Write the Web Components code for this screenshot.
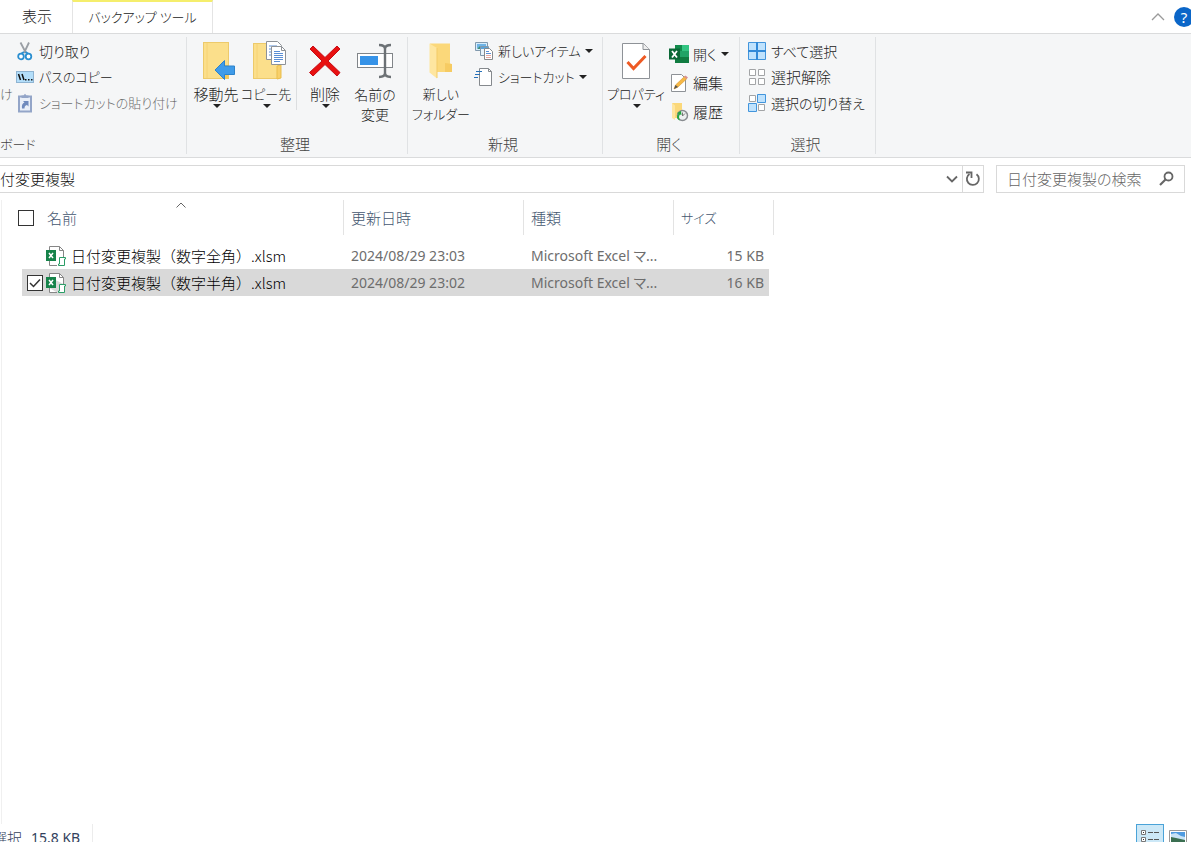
<!DOCTYPE html>
<html lang="ja">
<head>
<meta charset="utf-8">
<title>日付変更複製</title>
<style>
html,body{margin:0;height:100%;overflow:hidden;background:#fff}
body{font:300 15px/20px "Noto Sans CJK JP","Noto Sans",sans-serif;font-feature-settings:"palt";color:#222}
</style>
</head>
<body>
<file-explorer></file-explorer>
<script>
const ICONS = {
cut:[18,20,'<path d="M4.500 1.500 10 12M13 1.500 8 12" fill="none" stroke="#9a9fa5" stroke-width="1.800"/><path d="M8 11 5.500 12.500M9.500 11 12 12.500" stroke="#2b8fd0" stroke-width="2"/><circle cx="5" cy="15.500" r="2.800" fill="#fff" stroke="#2b8fd0" stroke-width="1.800"/><circle cx="12.500" cy="15.500" r="2.800" fill="#fff" stroke="#2b8fd0" stroke-width="1.800"/>'],
path:[18,12,'<rect x=".5" y=".5" width="17" height="11" fill="#b3defa" stroke="#8fb4d2"/><path d="M2.500 3 4.500 9M6 3 8 9" stroke="#111" stroke-width="1.500"/><path d="M9 8h1.500v1.500H9zM12 8h1.500v1.500H12zM15 8h1.500v1.500H15z" fill="#111"/>'],
paste:[18,20,'<path d="M3 3.500h12v15H3z" fill="#e9eff8" stroke="#93a5c8" stroke-width="2"/><path d="M5.500 4V2.500h2L9 .8l1.500 1.700h2V5h-7z" fill="#93a5c8"/><path d="M6 15.500c-.5-3.500.5-5.500 2.500-6L7 8h5.500v5.500L11 12c-2 .5-2.500 1.500-2.500 3.500z" fill="#6f8abd"/>'],
move:[40,38,'<g transform="translate(6)"><rect x="1.500" y=".5" width="25" height="36" fill="#fbdf8b" stroke="#edca6b"/><path d="M5 1v35" stroke="#f6d275"/><path d="M23 23h4v14h-4z" fill="#f3c95f"/><path d="m13 28 9.500-9.500V24h10v8.500h-10v5z" fill="#3f9be9" stroke="#2d83cb"/></g>'],
copy:[44,40,'<g transform="translate(8)"><rect x="1.500" y="2.500" width="25" height="35" fill="#fbdf8b" stroke="#edca6b"/><path d="M5 3v34" stroke="#f6d275"/><path d="m25 25 4-1v13l-4 1z" fill="#f8d06a" stroke="#e9bd4c"/><path d="M14.500.5h11l4 4v14h-15z" fill="#fff" stroke="#8e9297"/><path d="M17 5h8M17 8h3M17 11h3M17 14h3" stroke="#5b8fd5"/><path d="M19.500 5.500h10l4 4v14h-14z" fill="#fff" stroke="#8e9297"/><path d="M29.500 5.500v4h4" fill="none" stroke="#8e9297"/><path d="M22 10.500h6M22 12.500h9M22 14.500h9M22 16.500h9M22 18.500h9M22 20.500h6" stroke="#5b8fd5"/></g>'],
del:[34,34,'<path d="M2 5 5 2l12 11.500L29 2l3 3-12 12 12 11.500-3 3.500-12-11.500L5 32l-3.500-3.500L14 17z" fill="#e81010" stroke="#c60c16"/>'],
rename:[38,36,'<rect x="1.500" y="10.500" width="35" height="14" fill="#fff" stroke="#818589"/><rect x="4" y="13" width="18" height="9" fill="#3693e8"/><path d="M23 2c4 0 6 1 6 4 0-3 2-4 6-4M29 5v26M23 34c4 0 6-1 6-4 0 3 2 4 6 4" fill="none" stroke="#6c7175" stroke-width="2.400"/>'],
folder:[26,36,'<path d="M2 .5h20v20l2 1v7.500H6z" fill="#fbd87a"/><path d="m17 20 7 1v8h-7z" fill="#f6cb62"/><path d="M1.500.5 9 5v30.500l-7.500-6z" fill="#fee6a0"/><path d="M9 5v30" stroke="#f4cb66"/>'],
newitem:[20,20,'<path d="M1.500 1.500h12v8h-12z" fill="#d7edfc" stroke="#8199ad"/><path d="M3 3h9v4H3z" fill="#6fb4e6"/><path d="m3 8 3-3 3 3" fill="#3f8f7a"/><path d="M6.500 5.500h8v9h-8z" fill="#eaf4fb" stroke="#8199ad"/><path d="M7 6h7v2H7z" fill="#5aa3d7"/><path d="M10.500 7.500h5l3 3v8h-8z" fill="#fff" stroke="#86898d"/><path d="M12 10.500h3M12 12.500h5" stroke="#5b8fd5"/><path d="M12 14.500h5M12 16.500h5" stroke="#e5a6a0"/>'],
shortcut:[20,20,'<path d="M5.500 1.500h9l3 3v14h-12z" fill="#fff" stroke="#85898d"/><path d="M14.500 1.500v3h3" fill="none" stroke="#85898d"/><path d="M2 4.500h6M1 7.500h5M0 10.500h4" stroke="#2771b9"/>'],
prop:[30,38,'<path d="M1.500 1.500h21l6 6v29h-27z" fill="#fff" stroke="#8e9297"/><path d="M22 1.500v6h6.500" fill="#eee" stroke="#8e9297"/><path d="m6.500 20 6 6.500L24.500 14" fill="none" stroke="#ee5a24" stroke-width="3"/>'],
excel:[20,20,'<path d="M6 1h14v18H6z" fill="#21a366"/><path d="M6 1h7v6H6z" fill="#128a4b"/><path d="M13 1h7v6h-7z" fill="#33c481"/><path d="M6 13h14v6H6z" fill="#107c41"/><rect y="4.500" width="11" height="11" fill="#0b6836"/><path d="m3 7 5 6.500M8 7l-5 6.500" stroke="#fff" stroke-width="1.800"/>'],
edit:[20,20,'<path d="M2.500 1.500h10l4 4v13h-14z" fill="#fff" stroke="#8e9297"/><path d="m5 16 1.500-4L15.500 3.500l2.500 2L9 14z" fill="#f6b846" stroke="#d79528" stroke-width=".6"/><path d="m5 16 1.500-4L9 14z" fill="#555"/><path d="m15 4 1.500-1.500 2.500 2L17.500 6z" fill="#d99090"/>'],
history:[20,20,'<path d="M3 1h10v15H6z" fill="#fbd87a"/><path d="m3 1 3 2.500V18l-3-2z" fill="#fee6a0"/><circle cx="13.500" cy="13.500" r="5" fill="#edf0f1" stroke="#888c90" stroke-width="1.500"/><path d="M13.500 14v-3.500M13.500 14l2.500-2.500" stroke="#777"/><path d="M11 18.500c-3.500-1-4-4.500-1.500-6.500l-1.500-1 4-2 .5 4-1.500-.5c-1.500 1.500-1 4 0 6z" fill="#26a642"/>'],
all:[20,20,'<path d="M1.500 1.500h17v17h-17z" fill="#bfe2fd" stroke="#4295dc"/><path d="M10 1v18M1 10h18" stroke="#3189d8" stroke-width="2"/>'],
none:[20,20,'<path d="M2.500 2.500h6v6h-6zM11.500 2.500h6v6h-6zM2.500 11.500h6v6h-6zM11.500 11.500h6v6h-6z" fill="#fff" stroke="#a2a4a6"/>'],
invert:[20,20,'<path d="M2.500 2.500h6v6h-6zM11.500 11.500h6v6h-6z" fill="#fff" stroke="#a2a4a6"/><path d="M10.500 1.500h8v8h-8zM1.500 10.500h8v8h-8z" fill="#bfe2fd" stroke="#4295dc"/>'],
up:[14,10,'<path d="m1 8 6-6 6 6" fill="none" stroke="#9a9a9a" stroke-width="1.300"/>'],
sort:[10,6,'<path d="m.5 5.500 4.500-4.500 4.500 4.500" fill="none" stroke="#666"/>'],
down:[12,8,'<path d="m1 1.500 5 5 5-5" fill="none" stroke="#666" stroke-width="1.800"/>'],
reload:[16,16,'<path d="M11.500 3.200A6 6 0 1 1 4.500 3" fill="none" stroke="#666" stroke-width="1.800"/><path d="M1 1.500h5.500V7" fill="none" stroke="#666" stroke-width="1.800"/>'],
search:[16,16,'<circle cx="9.500" cy="5.500" r="4" fill="none" stroke="#666" stroke-width="1.800"/><path d="M6.500 8.500 1 14" stroke="#666" stroke-width="2.200"/>'],
xlsm:[20,22,'<path d="M3.500 5V1.500h10l4 4V12M3.500 16v4.500H11" fill="#fff" stroke="#868686"/><path d="M13.500 1.500v4h4" fill="none" stroke="#868686"/><rect y="5" width="10" height="11" fill="#16834a"/><path d="m3 8 4 5M7 8l-4 5" stroke="#fff" stroke-width="1.500"/><path d="M13.500 12.500h6v1.500h-1v6.500h-6V19h1z" fill="#fff" stroke="#2a9d66"/>'],
details:[20,16,'<path d="M1.500 1.500h4v4h-4zM1.500 8.500h4v4h-4z" fill="#fff" stroke="#777"/><path d="M3 3h1v1H3zM3 10h1v1H3z" fill="#333"/><path d="M8 3.500h5M14 3.500h5M8 10.500h5M14 10.500h5" stroke="#555"/>'],
thumbs:[18,14,'<path d="M.5.5h17v13H.5z" fill="#fff" stroke="#999"/><path d="M2 2h14v10H2z" fill="#4f9be0"/><path d="m2 4 5-1 5 3 4 1v3H2z" fill="#c8e3f6"/><path d="m2 7 5 1 9 2v2H2z" fill="#3b6f51"/>']
};
const define = (name, html) => customElements.define(name, class extends HTMLElement {
  connectedCallback(){
    if (this.shadowRoot) return;
    this.attachShadow({mode:'open'}).innerHTML = typeof html === 'function' ? html(this) : html;
  }
});

define('ui-icon', el => {
  const [w,h,body] = ICONS[el.getAttribute('name')];
  return `<style>:host{display:block;flex:none;line-height:0}svg{display:block}</style><svg width="${w}" height="${h}" viewBox="0 0 ${w} ${h}" aria-hidden="true">${body}</svg>`;
});

define('small-command', el => `<style>
:host{display:block}
button{display:flex;align-items:center;gap:4px;height:100%;width:100%;padding:0;border:0;background:none;font:inherit;font-feature-settings:inherit;color:inherit;white-space:nowrap;text-align:left}
.ic{display:flex;justify-content:center;width:20px;flex:none}
.ar{border:4px solid transparent;border-top-color:#222;border-bottom:0}
:host([disabled]) button{color:#6d6d6d}
:host([compact]) button{font-size:13px}
:host([medium]) button{font-size:14px}
</style><button type="button" ${el.hasAttribute('disabled')?'disabled':''}><span class="ic"><ui-icon name="${el.getAttribute('icon')}"></ui-icon></span><slot></slot>${el.hasAttribute('menu')?'<span class="ar"></span>':''}</button>`);

define('large-command', el => `<style>
:host{display:block;flex:none}
button{position:relative;display:flex;flex-direction:column;align-items:center;width:100%;padding:0;border:0;background:none;font:inherit;font-feature-settings:inherit;color:inherit;white-space:nowrap}
.ic{display:flex;align-items:center;height:40px;margin-bottom:3px}
.ar{position:absolute;top:63px;left:calc(50% - 3px);border:4px solid transparent;border-top-color:#222;border-bottom:0}
:host([compact]) button{font-size:13px}
:host([medium]) button{font-size:14px}
</style><button type="button"><span class="ic"><ui-icon name="${el.getAttribute('icon')}"></ui-icon></span><slot></slot>${el.hasAttribute('menu')?'<span class="ar"></span>':''}</button>`);

define('command-list', `<style>
:host{display:grid;grid-auto-rows:26px;align-content:start}
:host([loose]){grid-auto-rows:29px}
</style><slot></slot>`);

define('ribbon-group', el => `<style>
:host{display:flex;flex-direction:column;flex:none;box-sizing:border-box;height:117px;border-right:1px solid #e0e2e4}
.body{display:flex;flex:1;padding-top:1px}
.label{height:20px;padding-right:4px;text-align:center;color:#444}
:host([clipped]) .label{text-align:left;font-size:13px}
</style><div class="body"><slot></slot></div><div class="label">${el.getAttribute('label')}</div>`);

define('ribbon-tabs', `<style>
:host{display:flex;height:33px;border-bottom:1px solid #dadbdc;align-items:stretch}
button{border:0;background:none;font:inherit;font-feature-settings:inherit;color:inherit;padding:0}
.tab{width:72px;padding-left:2px;padding-bottom:2px;white-space:nowrap}
.active{box-sizing:border-box;width:141px;padding-left:0;font-size:13px;border:1px solid #e4e4e4;border-top:2px solid #f5ee6c;border-bottom:0}
.tools{display:flex;align-items:center;gap:9px;margin-left:auto;overflow:hidden}
.help{flex:none;width:20px;height:20px;margin-right:-3px;border-radius:50%;background:#0b66c8;color:#fff;font:400 15px/20px "Noto Sans",sans-serif}
</style><button type="button" class="tab">表示</button><button type="button" class="tab active">バックアップ ツール</button>
<div class="tools"><button type="button" aria-label="リボンの最小化"><ui-icon name="up"></ui-icon></button><button type="button" class="help">?</button></div>`);

define('command-ribbon', `<style>
:host{display:flex;height:120px;padding-top:3px;background:#f5f6f7;border-bottom:1px solid #dadbdc;overflow:hidden}
.g1{width:187px}.g2{width:221px}.g3{width:195px}.g4{width:137px}.g5{width:136px}
.cut{width:15px;padding-top:46px;color:#666;font-size:13px}
.sep{width:1px;height:60px;margin:12px 3px 0 5px;background:#dcdee0}
.w50{width:50px}.w54{width:54px}
.in{display:flex;padding-left:4px}
.g3 .in,.g4 .in{padding-left:6px}
.g5 command-list{padding-left:7px}
.g3 command-list,.g4 command-list{padding-left:6px}
.big{padding-top:3px}
.g4 command-list{padding-top:1px}
</style>
<ribbon-group class="g1" label="ボード" clipped><div class="cut">け</div><command-list>
<small-command icon="cut" medium>切り取り</small-command><small-command icon="path" compact>パスのコピー</small-command><small-command icon="paste" compact disabled>ショートカットの貼り付け</small-command></command-list></ribbon-group>
<ribbon-group class="g2" label="整理"><div class="in">
<large-command class="w50 big" icon="move" menu>移動先</large-command><large-command class="w50 big" icon="copy" menu compact>コピー先</large-command><span class="sep"></span><large-command class="w50 big" icon="del" menu>削除</large-command><large-command class="w50 big" icon="rename" medium><span>名前の</span><span>変更</span></large-command></div></ribbon-group>
<ribbon-group class="g3" label="新規"><div class="in"><large-command class="w54 big" icon="folder" compact><span>新しい</span><span>フォルダー</span></large-command></div><command-list><small-command icon="newitem" compact menu>新しいアイテム</small-command><small-command icon="shortcut" compact menu>ショートカット</small-command></command-list></ribbon-group>
<ribbon-group class="g4" label="開く"><div class="in"><large-command class="w54 big" icon="prop" menu compact>プロパティ</large-command></div><command-list loose><small-command icon="excel" medium menu>開く</small-command><small-command icon="edit">編集</small-command><small-command icon="history">履歴</small-command></command-list></ribbon-group>
<ribbon-group class="g5" label="選択"><command-list><small-command icon="all" medium>すべて選択</small-command><small-command icon="none">選択解除</small-command><small-command icon="invert" medium>選択の切り替え</small-command></command-list></ribbon-group>`);

define('address-row', `<style>
:host{display:flex;gap:12px;padding:7px 6px 0 0}
.box{display:flex;align-items:center;box-sizing:border-box;height:28px;border:1px solid #d9d9d9}
.path{flex:1;min-width:0;border-left:0}
.search{width:189px}
input{flex:1;min-width:0;height:22px;border:0;outline:0;padding:0 0 2px;background:none;font:inherit;font-feature-settings:inherit;color:#111}
.search input{padding-left:10px}
input::placeholder{color:#666;opacity:1}
button{display:flex;align-items:center;justify-content:center;width:20px;height:26px;padding:0;border:0;background:none}
.re{border-left:1px solid #d9d9d9;width:21px}
.find{width:34px}
</style><div class="box path"><input aria-label="アドレス" value="付変更複製"><button type="button" aria-label="履歴"><ui-icon name="down"></ui-icon></button><button type="button" class="re" aria-label="更新"><ui-icon name="reload"></ui-icon></button></div>
<div class="box search"><input aria-label="検索" placeholder="日付変更複製の検索"><button type="button" class="find" aria-label="検索開始"><ui-icon name="search"></ui-icon></button></div>`);

define('check-box', el => `<style>
:host{display:block;flex:none;width:16px;height:16px}
input{display:block;appearance:none;box-sizing:border-box;width:16px;height:16px;margin:0;border:1px solid #333;background:#fff}
input:checked{background:#fff url('data:image/svg+xml,<svg xmlns="http://www.w3.org/2000/svg" width="14" height="14"><path d="m2 7 3.500 3.500L12 3.500" fill="none" stroke="%23333" stroke-width="1.500"/></svg>')}
</style><input type="checkbox" aria-label="${el.getAttribute('label')}" ${el.hasAttribute('checked')?'checked':''}>`);

define('file-list', `<style>
:host{display:block;flex:1;min-height:0;margin:7px 0 0 1px;border-left:1px solid #f0f0f0}
table{table-layout:fixed;width:772px;border-spacing:0}
.c1{width:342px}.c2{width:180px}.c3{width:150px}.c4{width:100px}
th{position:relative;box-sizing:border-box;height:35px;padding:0 0 0 7px;border-right:1px solid #e3e3e3;text-align:left;font-weight:inherit;color:#43566f}
th:last-child{font-size:13px}
.h{display:flex;align-items:center;gap:13px;padding-left:9px}
.s{position:absolute;top:2px;left:51%}
tbody::before{content:"";display:block;height:7px}
td{height:27px;padding:0 0 0 7px;color:#6d6d6d;font-family:"Noto Sans","Noto Sans CJK JP",sans-serif;font-size:14px;font-weight:400;white-space:nowrap}
td:first-child{padding-left:25px;font:inherit;color:#000}
td:last-child{text-align:right;padding-right:10px}
.n{display:flex;align-items:center;gap:3px}
.n ui-icon{margin-right:2px}
.n span{font-feature-settings:normal}
.empty{width:16px}
.on{background:linear-gradient(#d9d9d9,#d9d9d9) 20px 0/calc(100% - 25px) 100% no-repeat}
</style><table><colgroup><col class="c1"><col class="c2"><col class="c3"><col class="c4"></colgroup>
<thead><tr><th><div class="h"><check-box label="すべて選択"></check-box>名前</div><ui-icon class="s" name="sort"></ui-icon></th><th>更新日時</th><th>種類</th><th>サイズ</th></tr></thead>
<tbody><tr><td><div class="n"><i class="empty"></i><ui-icon name="xlsm"></ui-icon><span>日付変更複製（数字全角）.xlsm</span></div></td><td>2024/08/29 23:03</td><td>Microsoft Excel マ...</td><td>15 KB</td></tr>
<tr class="on"><td><div class="n"><check-box label="日付変更複製（数字半角）.xlsm" checked></check-box><ui-icon name="xlsm"></ui-icon><span>日付変更複製（数字半角）.xlsm</span></div></td><td>2024/08/29 23:02</td><td>Microsoft Excel マ...</td><td>16 KB</td></tr></tbody></table>`);

define('status-bar', `<style>
:host{display:flex;flex:none;height:18px;overflow:hidden;color:#33415c}
.t{display:flex;gap:9px;height:28px;line-height:28px;margin-left:-8px;padding-right:12px;border-right:1px solid #ececec;white-space:nowrap}
.t b{font:400 14px/28px "Noto Sans",sans-serif}
.v{display:flex;margin-left:auto}
button{display:flex;align-items:center;justify-content:center;box-sizing:border-box;width:28px;height:26px;padding:0;border:1px solid transparent;background:none}
.on{background:#cce8f7;border-color:#4aa3d8}
.v{margin-right:-1px}
</style><div class="t"><span>選択</span><b>15.8 KB</b></div><div class="v"><button type="button" class="on" aria-label="詳細"><ui-icon name="details"></ui-icon></button><button type="button" aria-label="縮小版"><ui-icon name="thumbs"></ui-icon></button></div>`);

define('file-explorer', `<style>:host{display:flex;flex-direction:column;height:100vh;overflow:hidden}</style>
<ribbon-tabs></ribbon-tabs><command-ribbon></command-ribbon><address-row></address-row><file-list></file-list><status-bar></status-bar>`);
</script>
</body>
</html>
